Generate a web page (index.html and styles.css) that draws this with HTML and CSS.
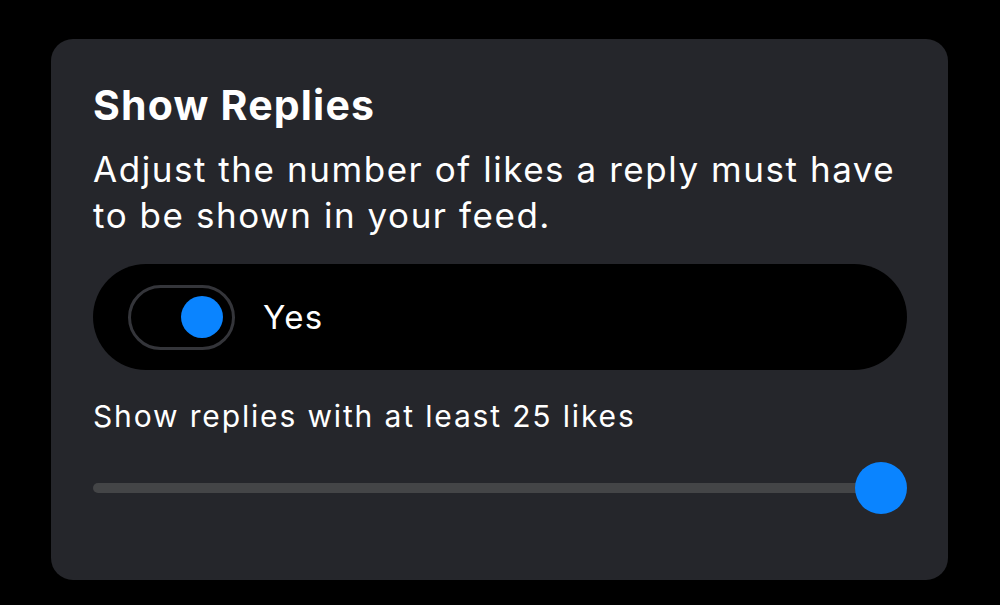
FILE: index.html
```html
<!DOCTYPE html>
<html>
<head>
<meta charset="utf-8">
<link rel="stylesheet" href="styles.css">
</head>
<body>
<div class="card">
  <h1 class="title">Show Replies</h1>
  <p class="desc">Adjust the number of likes a reply must have to be shown in your feed.</p>
  <div class="pill">
    <div class="toggle"><div class="knob"></div></div>
    <span class="pill-label">Yes</span>
  </div>
  <div class="slider-label">Show replies with at least 25 likes</div>
  <div class="slider">
    <div class="track"></div>
    <div class="thumb"></div>
  </div>
</div>
</body>
</html>
```
FILE: styles.css
```css
html, body {
  margin: 0;
  padding: 0;
  background: #000;
  width: 1000px;
  height: 605px;
  overflow: hidden;
  font-family: Inter, "Noto Sans", sans-serif;
  color: #fff;
}
body {
  padding: 39px 52px 0 51px;
  box-sizing: border-box;
}
.card {
  background: #25262b;
  border-radius: 22px;
  height: 541px;
  box-sizing: border-box;
  padding: 42px 41px 0 42px;
}
.title {
  margin: 0;
  font-size: 41px;
  font-weight: 700;
  line-height: 48px;
  letter-spacing: 1.2px;
}
.desc {
  margin: 17px 0 0;
  font-size: 35px;
  line-height: 46px;
  font-weight: 400;
  letter-spacing: 1.55px;
}
.pill {
  margin-top: 26px;
  height: 106px;
  background: #000;
  border-radius: 53px;
  display: flex;
  align-items: center;
  padding-left: 35px;
}
.toggle {
  display: flex;
  align-items: center;
  justify-content: flex-end;
  padding-right: 9px;
  box-sizing: border-box;
  width: 107px;
  height: 65px;
  border: 3px solid #34353a;
  border-radius: 33px;
}
.knob {
  width: 42px;
  height: 42px;
  border-radius: 50%;
  background: #0a84ff;
}
.pill-label {
  margin-left: 28px;
  font-size: 33px;
  letter-spacing: 1.3px;
}
.slider-label {
  margin-top: 26px;
  font-size: 30px;
  line-height: 40px;
  letter-spacing: 1.85px;
}
.slider {
  margin-top: 26px;
  height: 52px;
  position: relative;
  display: flex;
  align-items: center;
}
.track {
  flex: 1;
  height: 10px;
  background: #444547;
  border-radius: 5px;
  margin-right: 30px;
}
.thumb {
  position: absolute;
  right: 0;
  top: 0;
  width: 52px;
  height: 52px;
  border-radius: 50%;
  background: #0a84ff;
}
```
